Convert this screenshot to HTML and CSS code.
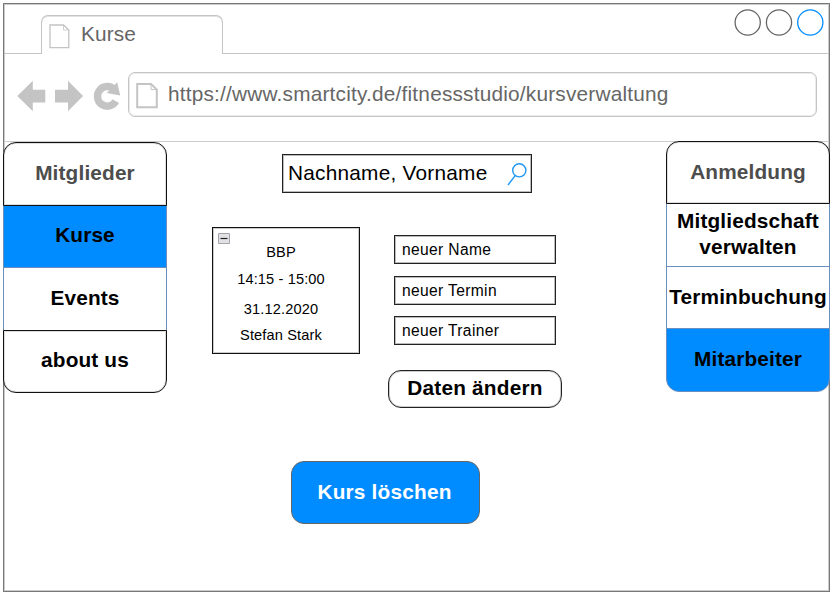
FILE: index.html
```html
<!DOCTYPE html>
<html lang="de">
<head>
<meta charset="utf-8">
<title>Kurse</title>
<link rel="stylesheet" href="styles.css">
</head>
<body>
<div class="window">
  <header class="tabs">
    <div class="tabs-lead"></div>
    <div class="tab">
      <svg class="tab-icon" width="22" height="26" viewBox="0 0 22 26" fill="none" stroke="#c4c4c4" stroke-width="1.3"><path d="M1 1H14.5L19.8 6V23.6H1Z"/><path d="M14.5 1V6H19.8" stroke-width=".8"/></svg>
      <span>Kurse</span>
    </div>
    <div class="tabs-rest">
      <svg width="90" height="28" viewBox="0 0 90 28" fill="none" stroke="#666" stroke-width="1.3"><circle cx="13.7" cy="14.5" r="12.6"/><circle cx="45" cy="14.5" r="12.6"/><circle cx="76.3" cy="14.5" r="12.6" stroke="#008cff"/></svg>
    </div>
  </header>
  <div class="toolbar">
    <svg class="nav-icons" width="104" height="32" viewBox="0 0 104 32" fill="#c4c4c4"><path d="M0.3 16L15.8 .8V9.8H28.3V22.4H15.8V31.2Z"/><path d="M66 16L51 .8V9.8H38V22.4H51V31.2Z"/><path d="M97.2 9.4A9.8 9.8 0 1 0 98.8 21.2" fill="none" stroke="#c4c4c4" stroke-width="7.4"/><path d="M100.2 2.2L103.2 15.6L89.8 12.9Z"/></svg>
    <div class="address">
      <svg width="22" height="26" viewBox="0 0 22 26" fill="none" stroke="#c4c4c4" stroke-width="2"><path d="M1.2 1H15L20.8 6.6V24.2H1.2Z"/><path d="M15 1V6.6H20.8" stroke-width="1"/></svg>
      <span>https://www.smartcity.de/fitnessstudio/kursverwaltung</span>
    </div>
  </div>
  <div class="page">
    <nav class="menu menu-left">
      <a class="item outlined muted">Mitglieder</a>
      <a class="item active">Kurse</a>
      <a class="item tall">Events</a>
      <a class="item outlined">about us</a>
    </nav>
    <main>
      <div class="search">
        <span>Nachname, Vorname</span>
        <svg width="20" height="24" viewBox="0 0 20 24" fill="none" stroke="#1f97f5" stroke-width="1.4"><circle cx="12.3" cy="8.3" r="6.6"/><path d="M8.2 13.6L1 23"/></svg>
      </div>
      <div class="editor">
        <section class="course">
          <svg class="collapse" width="12" height="11" viewBox="0 0 12 11"><path d="M.5 .5H11.5V10.5H.5Z" fill="#e2e2e4" stroke="#a2a4b0"/><path d="M2.5 5.5H9.5" stroke="#222" stroke-width="1.2"/></svg>
          <p>BBP</p>
          <p>14:15 - 15:00</p>
          <p class="date">31.12.2020</p>
          <p class="trainer">Stefan Stark</p>
        </section>
        <form class="fields">
          <div class="field">neuer Name</div>
          <div class="field">neuer Termin</div>
          <div class="field">neuer Trainer</div>
          <button class="change" type="button">Daten ändern</button>
        </form>
      </div>
      <button class="delete" type="button">Kurs löschen</button>
    </main>
    <nav class="menu menu-right">
      <a class="item outlined muted">Anmeldung</a>
      <a class="item tall">Mitgliedschaft verwalten</a>
      <a class="item">Terminbuchung</a>
      <a class="item active">Mitarbeiter</a>
    </nav>
  </div>
</div>
</body>
</html>
```
FILE: styles.css
```css
* { box-sizing: border-box; }
body {
  margin: 0;
  padding: 3px;
  background: #fff;
  color: #000;
  font: 20.8px/26px "Liberation Sans", Arial, sans-serif;
}
.window {
  width: 827px;
  height: 589px;
  border: 1px solid #777;
  box-shadow: inset 0 0 0 1px #ccc;
  display: flex;
  flex-direction: column;
}
.tabs { display: flex; height: 50px; color: #666; }
.tabs-lead { width: 37px; border-bottom: 1px solid #c4c4c4; }
.tab {
  width: 182px;
  margin-top: 11px;
  padding: 8px 0 0 7px;
  border: 1px solid #c4c4c4;
  border-bottom: 0;
  border-radius: 7px 7px 0 0;
  box-shadow: inset 0 1px 0 #e2e2e2;
  display: flex;
}
.tab span { margin: -3px 0 0 10px; letter-spacing: .15px; }
.tabs-rest {
  flex: 1;
  border-bottom: 1px solid #c4c4c4;
  padding: 4px 5px 0 0;
  display: flex;
  justify-content: flex-end;
}
.toolbar {
  height: 88px;
  padding: 18px 12px 0 13px;
  display: flex;
  border-bottom: 1px solid #ccc;
}
.nav-icons { margin-top: 8px; }
.address {
  flex: 1;
  height: 45px;
  margin-left: 7px;
  padding: 10px 7px;
  border: 1px solid #c4c4c4;
  border-radius: 7px;
  box-shadow: inset 0 0 0 1px #ececec;
  color: #666;
  display: flex;
}
.address span { margin: -2px 0 0 10px; white-space: nowrap; letter-spacing: .205px; }
.page { flex: 1; display: flex; }
.menu { width: 164px; font-weight: bold; text-align: center; letter-spacing: .15px; }
.menu-left { margin-left: -1px; }
.menu-right { margin: -1px -1px 0 0; }
.item {
  height: 63px;
  margin-bottom: -1px;
  padding: 0 10px 2px;
  border: 1px solid #6c8ebf;
  background: #fff;
  display: flex;
  align-items: center;
  justify-content: center;
  position: relative;
}
.menu-left .item { padding-bottom: 3px; }
.menu-right .item { padding: 0 0 2px; }
.menu-left .item:first-child, .tall { height: 64px; }
.item:first-child { border-radius: 13px 13px 0 0; }
.item:last-child { border-radius: 0 0 13px 13px; }
.menu-right .item:last-child { height: 64px; }
.outlined { border-color: #111; box-shadow: inset 0 0 0 1px #ddd; z-index: 1; }
.muted { color: #4d4d4d; }
.item.active { background: #008cff; }
main { flex: 1; }
.search {
  width: 250px;
  height: 39px;
  margin: 12px 0 0 115px;
  padding: 5px 4px 0 5px;
  border: 1px solid #222;
  box-shadow: inset 0 0 0 1px #bbb;
  letter-spacing: .24px;
  display: flex;
  justify-content: space-between;
}
.search svg { margin-top: 2px; }
.editor { display: flex; margin: 34px 0 0 45px; }
.course {
  width: 148px;
  height: 127px;
  padding: 5px 10px 0 0;
  border: 1px solid #111;
  box-shadow: inset 0 0 0 1px #ccc;
  font-size: 14.6px;
  line-height: 18px;
  letter-spacing: .13px;
  text-align: center;
}
.collapse { display: block; margin: 0 0 -1px 5px; }
.course p { margin: 0 0 9px; }
.course .date { margin: 12px 0 8px; }
.fields { margin: 8px 0 0 34px; }
.field {
  width: 162px;
  height: 29px;
  margin-bottom: 11px;
  padding-left: 7px;
  border: 1px solid #222;
  box-shadow: inset 0 0 0 1px #bbb;
  font-size: 15.6px;
  line-height: 27px;
  letter-spacing: .35px;
}
.field:first-child { margin-bottom: 12px; }
button {
  display: block;
  padding: 0 0 2px;
  font: bold 20.8px/26px "Liberation Sans", Arial, sans-serif;
  letter-spacing: .2px;
}
.change {
  width: 174px;
  height: 38px;
  margin: 25px 0 0 -6px;
  border: 1px solid #222;
  border-radius: 13px;
  box-shadow: inset 0 0 0 1px #ccc;
  background: #fff;
  color: #000;
}
.delete {
  width: 189px;
  height: 63px;
  margin: 53px 0 0 124px;
  padding-right: 2px;
  border: 1px solid #666;
  border-radius: 13px;
  background: #008cff;
  color: #fff;
}
```
